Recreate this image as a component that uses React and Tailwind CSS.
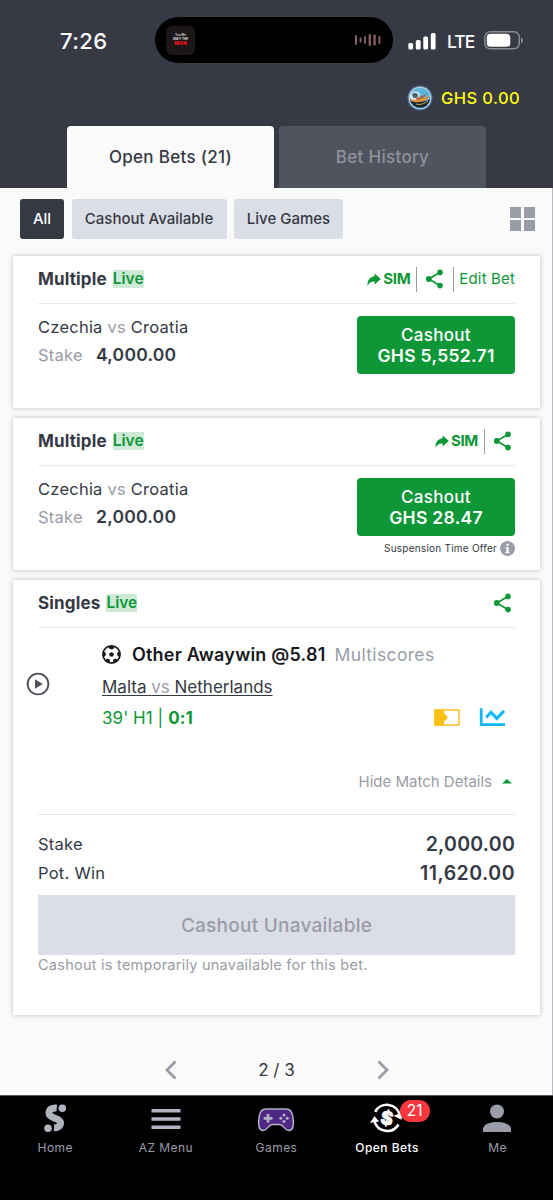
import { clsx } from "clsx";

const ShareIcon = () => (
  <svg width="19" height="20" viewBox="0 0 19 20" className="text-[#0d9737]">
    <path
      d="M15.2 3.3 3.8 10l11.4 6.7"
      fill="none"
      stroke="currentColor"
      strokeWidth="1.7"
    />
    <circle cx="15" cy="3.4" r="2.8" fill="currentColor" />
    <circle cx="3.8" cy="10" r="2.9" fill="currentColor" />
    <circle cx="15" cy="16.6" r="2.8" fill="currentColor" />
  </svg>
);

const SimIcon = () => (
  <svg width="14" height="13" viewBox="0 0 14 13">
    <path
      d="M7.600.4 13.8 6 7.600 11.400V8.5C4.600 8.300 2.200 9.400.6 12.600 0 7.600 3 3.600 7.600 3.300Z"
      fill="#0d9737"
    />
  </svg>
);

const StatusBar = () => (
  <div className="flex h-[63px] items-start pl-[60px] pr-[29px]">
    <span className="mt-[26px] w-[95px] text-[22px] leading-[30px] font-medium tracking-[0.4px] text-white">
      7:26
    </span>
    <div className="mt-[17px] flex h-[46px] w-[238px] items-center justify-between rounded-full bg-black pl-[11px] pr-3">
      <div className="flex h-[29px] w-[29px] flex-col items-center justify-center rounded-md bg-[#1c1618]">
        <span className="text-[3px] leading-[3px] font-bold text-[#c9c2c2]">
          You Me
        </span>
        <span className="text-[3px] leading-[4px] font-bold text-[#e8e0e0]">
          ONLY THE
        </span>
        <span className="text-[5px] leading-[5px] font-black text-[#e0151d]">
          MAN
        </span>
      </div>
      <svg width="26" height="14" viewBox="0 0 26 14" fill="#855d5e">
        <rect x="0" y="2" width="2" height="10" rx="1" />
        <rect x="4.600" y="4.500" width="2" height="5" rx="1" />
        <rect x="9" y="3" width="2" height="8" rx="1" />
        <rect x="13.600" y="1" width="2.400" height="12" rx="1" />
        <rect x="18.400" y="1.500" width="2.400" height="11" rx="1" />
        <rect x="23.400" y="3" width="2" height="8" rx="1" />
      </svg>
    </div>
    <div className="mt-[31px] ml-[15px] flex h-[19px] items-center">
      <svg width="29" height="18" viewBox="0 0 29 18" fill="#fff">
        <rect x="0.300" y="11" width="4.800" height="6.500" rx="1.500" />
        <rect x="7.800" y="8" width="4.800" height="9.500" rx="1.500" />
        <rect x="15.300" y="4.500" width="4.800" height="13" rx="1.500" />
        <rect x="22.800" y="1" width="4.800" height="16.500" rx="1.500" />
      </svg>
      <span className="mt-[2px] ml-[10px] w-[37px] text-[17.5px] leading-5 font-medium tracking-[-0.9px] text-white">
        LTE
      </span>
      <svg width="40" height="19" viewBox="0 0 40 19">
        <rect
          x="0.800"
          y="0.800"
          width="34.500"
          height="17"
          rx="5.500"
          fill="none"
          stroke="#8b8d95"
          strokeWidth="1.400"
        />
        <rect x="2.800" y="2.800" width="23.500" height="13" rx="3.600" fill="#fff" />
        <path d="M37 6.500c2.400.8 2.400 5 0 5.800z" fill="#8b8d95" />
      </svg>
    </div>
  </div>
);

const Avatar = () => (
  <svg width="26" height="26" viewBox="0 0 26 26">
    <circle cx="13" cy="13" r="12.500" fill="#51709a" />
    <circle cx="13" cy="13" r="11.300" fill="#bfd3e0" />
    <circle cx="13" cy="13" r="10.300" fill="#59b5dc" />
    <path d="M2.900 14.500C7 17 18 18 23.200 14a10.300 10.300 0 0 1-20.300.5z" fill="#18262d" />
    <path d="M3 11c1-5 8-6 10-2l-1 5-8 2z" fill="#d8e6e8" />
    <path d="M5 10c1-3 6-2.500 6 .5s-4 3-5 1.500z" fill="#4a6068" />
    <path d="M3.500 14c5 3 12-1 19-3-1 4-9 7-15 6-2 0-4-1-4-3z" fill="#e8902c" />
    <path d="M9 13c4 0 7-3 10-4-1 3-5 5-9 6z" fill="#b9572a" />
    <path d="M9 19c4 1 8 0 12-3" stroke="#d5b05b" fill="none" />
  </svg>
);

const LiveTag = () => (
  <span className="bg-[#cfe9d7] text-[15.5px] leading-[18px] font-semibold text-[#0d9737]">
    Live
  </span>
);

const CardHeader = ({ title, sim, edit }) => (
  <div className="flex h-12 items-center justify-between border-b border-[#e9eaee] pb-px">
    <div className="flex items-center gap-[6px]">
      <h2 className="text-[17px] leading-5 font-bold tracking-[0.15px] text-[#353944]">
        {title}
      </h2>
      <LiveTag />
    </div>

    <div className="flex items-center text-[#0d9737]">
      {sim && (
        <div className="flex h-[25px] items-center gap-[2px] border-r border-[#9a9ca8] pr-[6px]">
          <SimIcon />
          <span className="text-[15px] font-bold tracking-[-0.3px]">SIM</span>
        </div>
      )}
      <div className={clsx("pl-[8px]", edit ? "pr-[9px]" : "pr-[3px]")}>
        <ShareIcon />
      </div>
      {edit && (
        <span className="flex h-[25px] items-center border-l border-[#9a9ca8] pl-[5px] text-[15px] tracking-[0.15px]">
          Edit Bet
        </span>
      )}
    </div>
  </div>
);

const MultipleCard = ({ stake, cashout, edit, offer }) => (
  <section className="h-[152px] bg-white px-[25px] shadow-[0_0_5px_rgba(0,0,0,0.25)]">
    <CardHeader title="Multiple" sim edit={edit} />

    <div className="flex justify-between pt-[12px]">
      <div className="text-[16.5px] tracking-[0.23px] text-[#353944]">
        <p className="leading-[22px]">
          Czechia <span className="text-[#9a9ca8]">vs</span> Croatia
        </p>
        <p className="mt-[6px] flex leading-[22px]">
          <span className="w-[58px] text-[#9a9ca8]">Stake</span>
          <span className="text-[17.5px] font-semibold">{stake}</span>
        </p>
      </div>

      <div>
        <button className="flex h-[58px] w-[158px] flex-col items-center justify-center rounded-[4px] bg-[#0d9737] pt-px text-[17.5px] leading-[21px] tracking-[0.3px] text-white">
          <span className="text-[17px] font-medium">Cashout</span>
          <span className="-mt-px font-semibold">GHS {cashout}</span>
        </button>
        {offer && (
          <div className="mt-[4px] flex items-center justify-end gap-[3px]">
            <span className="text-[10px] leading-4 tracking-[0.23px] text-[#353944]">
              Suspension Time Offer
            </span>
            <svg width="15" height="15" viewBox="0 0 15 15">
              <circle cx="7.500" cy="7.500" r="7.500" fill="#9a9ca8" />
              <path d="M6.400 2.800h2.300v2H6.400zM5.700 6h3v5h.8v1.200H5.500V11h.9V7.200h-.7z" fill="#fff" />
            </svg>
          </div>
        )}
      </div>
    </div>
  </section>
);

const SinglesCard = () => (
  <section className="h-[435px] bg-white px-[25px] shadow-[0_0_5px_rgba(0,0,0,0.25)]">
    <CardHeader title="Singles" />

    <div className="flex h-[187px] border-b border-[#e4e5ea]">
      <div className="-ml-3 w-[76px] pt-[44px]">
        <svg width="24" height="24" viewBox="0 0 24 24">
          <circle cx="12" cy="12" r="10.400" fill="none" stroke="#50535d" strokeWidth="1.900" />
          <path d="M9 7.300v9.400l7.800-4.700z" fill="#50535d" />
        </svg>
      </div>

      <div className="flex-1 pt-[16px]">
        <div className="flex items-center leading-[22px]">
          <svg width="19" height="19" viewBox="0 0 19 19" className="mb-[2px]">
            <circle cx="9.500" cy="9.500" r="8.600" fill="none" stroke="#15181c" strokeWidth="1.600" />
            <path
              d="M9.500 6.900 12 8.700l-.9 2.900H7.900L7 8.700z"
              fill="#15181c"
            />
            <path
              d="M6 1.200h7L11.800 3.500l-2.300 1-2.300-1zM.9 6.500l2.500.8.6 2.500-1.600 2L.8 11.300zM18.100 6.500l-2.500.8-.6 2.500 1.600 2 1.600-.5zM3.200 15.500l1.700-2 2.500.7.700 2.600-1.300 1.400zM15.800 15.500l-1.700-2-2.500.7-.7 2.600 1.300 1.400z"
              fill="#15181c"
            />
          </svg>
          <span className="ml-[11px] text-[18px] font-semibold tracking-[0.2px] text-[#15181c]">
            Other Awaywin @5.81
          </span>
          <span className="ml-[9px] text-[17.5px] tracking-[0.35px] text-[#9a9ca8]">
            Multiscores
          </span>
        </div>
        <p className="mt-[10px] text-[17px] leading-[22px] text-[#353944] underline underline-offset-2">
          Malta <span className="text-[#9a9ca8]">vs</span> Netherlands
        </p>
        <div className="mt-[10px] flex h-[22px] items-center justify-between pr-[10px]">
          <p className="text-[17px] tracking-[0.05px] text-[#0d9737]">
            39' H1 | <span className="font-bold">0:1</span>
          </p>
          <div className="flex items-center gap-[19px] pb-[3px]">
            <svg width="26" height="17" viewBox="0 0 26 17">
              <rect x="1" y="1" width="24" height="15" fill="#fff" stroke="#fcc22f" strokeWidth="1.600" />
              <path d="M.5.500h9.500v3.500l4 4.500-4 4.500v3.500H.5z" fill="#fcc010" />
            </svg>
            <svg width="26" height="19" viewBox="0 0 27 19" fill="none" stroke="#10b6fa" strokeWidth="2.800">
              <path d="M2.300 0v17H27" />
              <path d="M7.500 9.500 12.500 4l6 6.500L26 2.500" strokeWidth="3.200" />
            </svg>
          </div>
        </div>
        <div className="mt-[41px] flex items-center justify-end leading-[22px]">
          <span className="text-[15px] text-[#9a9ca8]">Hide Match Details</span>
          <svg width="10" height="5" viewBox="0 0 10 5" className="mr-[3px] mb-[2px] ml-[10px]">
            <path d="M0 4.500 5 0l5 4.500z" fill="#0d9737" />
          </svg>
        </div>
      </div>
    </div>

    <div className="pt-[15px] text-[16.5px] tracking-[0.25px] text-[#353944]">
      <div className="flex h-[29px] items-center justify-between">
        <span>Stake</span>
        <span className="text-[19.5px] font-semibold">2,000.00</span>
      </div>
      <div className="flex h-[29px] items-center justify-between">
        <span>Pot. Win</span>
        <span className="text-[19.5px] font-semibold tracking-[0.5px]">
          11,620.00
        </span>
      </div>
    </div>

    <button className="mt-[7px] block h-[60px] w-full bg-[#dcdee7] pt-[2px] text-[19px] font-medium tracking-[0.25px] text-[#9a9ca8]">
      Cashout Unavailable
    </button>
    <p className="text-[14.5px] leading-[19px] tracking-[0.25px] text-[#9a9ca8]">
      Cashout is temporarily unavailable for this bet.
    </p>
  </section>
);

const NavItem = ({ label, active, children }) => (
  <div className="flex flex-1 flex-col items-center">
    <div className="relative flex h-[34px] items-center justify-center">
      {children}
    </div>
    <span
      className={clsx(
        "text-[12px] leading-4 tracking-[0.45px]",
        active ? "font-medium text-white" : "text-[#9a9ca8]"
      )}
    >
      {label}
    </span>
  </div>
);

const BottomNav = () => (
  <nav className="flex h-[105px] border-t border-[#55565c] bg-black pt-[10px]">
    <NavItem label="Home">
      <svg width="23" height="28" viewBox="0 0 23 28" fill="#b0b3c0" className="-mt-[10px]">
        <circle cx="18.300" cy="4.200" r="3.800" />
        <circle cx="4" cy="24.200" r="3.800" />
        <path
          d="M12.800 4C7.500 3.400 5 6 5 9c0 6 11.500 4.500 11.500 10 0 3-3 5-6.500 4.800"
          fill="none"
          stroke="#b0b3c0"
          strokeWidth="7"
        />
      </svg>
    </NavItem>
    <NavItem label="AZ Menu">
      <svg width="30" height="22" viewBox="0 0 30 22" fill="#b0b3c0" className="-mt-[8px]">
        <path d="M.500 1h29v3.400h-29zM.500 9.300h29v3.400h-29zM.500 17.600h29V21h-29z" />
      </svg>
    </NavItem>
    <NavItem label="Games">
      <svg width="38" height="26" viewBox="0 0 38 26" className="-mt-[6px]">
        <path
          d="M9 2h20c4.500 0 6.500 3.500 7 8.500.6 6 1 13-4.500 13-4 0-4.500-6-9-6h-7c-4.500 0-5 6-9 6C1 23.500 1.400 16.500 2 10.500 2.500 5.500 4.500 2 9 2z"
          fill="#4f2885"
          stroke="#b0b3c0"
          strokeWidth="1.500"
        />
        <path d="M9.600 7h2.800v2.900h3v2.800h-3v2.900H9.600v-2.900h-3V9.900h3z" fill="#b0b3c0" />
        <g fill="#b0b3c0">
          <circle cx="27" cy="8" r="1.500" />
          <circle cx="27" cy="14.400" r="1.500" />
          <circle cx="23.800" cy="11.200" r="1.500" />
          <circle cx="30.200" cy="11.200" r="1.500" />
        </g>
      </svg>
    </NavItem>
    <NavItem label="Open Bets" active>
      <svg width="33" height="32" viewBox="0 0 33 32" className="-mt-[10px] mr-[2px]">
        <g fill="none" stroke="#fff" strokeWidth="2.600">
          <path d="M5.200 9.800A13.200 13.200 0 0 1 29.800 13.500" />
          <path d="M28.500 22.500A13.200 13.200 0 0 1 4.400 19" />
        </g>
        <path d="M23.500 13.800 32.500 10.500 31.500 17.800zM0 20.800 4.500 14.200 9.300 19.500z" fill="#fff" />
        <text
          x="17"
          y="22.700"
          textAnchor="middle"
          fill="#fff"
          stroke="#fff"
          strokeWidth="0.500"
          transform="rotate(10 17 16)"
          className="text-[18.5px] font-black"
        >
          $
        </text>
      </svg>
      <span className="absolute -top-[6px] left-[30px] flex h-[22px] w-[30px] items-center justify-center rounded-full bg-[#fa363f] text-[15.5px] text-white">
        21
      </span>
    </NavItem>
    <NavItem label="Me">
      <svg width="28" height="29" viewBox="0 0 28 29" fill="#9a9ca8" className="-mt-[9px] mr-px">
        <circle cx="14" cy="7.500" r="7" />
        <path d="M0 28v-3c0-4.500 7-7 14-7s14 2.500 14 7v3z" />
      </svg>
    </NavItem>
  </nav>
);

const App = () => {
  return (
    <div className="h-[1200px] w-[553px] overflow-hidden bg-[#fafafa] font-['Inter','Liberation_Sans',sans-serif]">
      <header className="h-[188px] bg-[#373a45]">
        <StatusBar />

        <div className="flex h-[63px] items-center justify-end pt-[7px] pr-[33px]">
          <Avatar />
          <span className="mt-px ml-[8px] text-[16.5px] font-medium tracking-[0.4px] text-[#fdfd0e]">
            GHS 0.00
          </span>
        </div>

        <div className="flex gap-[5px] pl-[67px] text-[17px] leading-[63px] tracking-[0.3px]">
          <div className="h-[62px] w-[207px] rounded-t bg-[#fafafa] text-center font-medium text-[#353944]">
            Open Bets (21)
          </div>
          <div className="h-[62px] w-[207px] rounded-t bg-[#50545f] text-center font-medium text-[#8f929d]">
            Bet History
          </div>
        </div>
      </header>

      <main className="h-[907px] border-r border-[#b9b9be] pt-[11px] pl-[13px]">
        <div className="flex h-10 items-center pl-[7px] text-[15px] leading-10 font-medium text-[#353944]">
          <span className="w-11 rounded-[3px] bg-[#353944] text-center text-white">
            All
          </span>
          <span className="ml-2 w-[155px] rounded-[3px] bg-[#dcdee7] pr-px text-center">
            Cashout Available
          </span>
          <span className="ml-[7px] w-[109px] rounded-[3px] bg-[#dcdee7] text-center">
            Live Games
          </span>
          <div className="mr-[17px] ml-auto grid grid-cols-2 gap-x-[3px] gap-y-[2px]">
            <i className="h-[11px] w-[11px] bg-[#9a9ca8]" />
            <i className="h-[11px] w-[11px] bg-[#9a9ca8]" />
            <i className="h-[11px] w-[11px] bg-[#9a9ca8]" />
            <i className="h-[11px] w-[11px] bg-[#9a9ca8]" />
          </div>
        </div>

        {/* Bet slips */}
        <div className="mt-[17px] flex w-[527px] flex-col gap-[10px]">
          <MultipleCard stake="4,000.00" cashout="5,552.71" edit />
          <MultipleCard stake="2,000.00" cashout="28.47" offer />
          <SinglesCard />
        </div>

        {/* Pagination */}
        <div className="mt-[44px] flex items-center justify-center pr-3 text-[#353944]">
          <svg width="12" height="20" viewBox="0 0 12 20" fill="none" stroke="#9a9ca8" strokeWidth="2.800">
            <path d="M10.500 1.500 2 10l8.500 8.500" />
          </svg>
          <span className="w-[200px] text-center text-[17px] leading-[22px]">2 / 3</span>
          <svg width="12" height="20" viewBox="0 0 12 20" fill="none" stroke="#9a9ca8" strokeWidth="2.800">
            <path d="M1.500 1.500 10 10l-8.500 8.500" />
          </svg>
        </div>
      </main>

      <BottomNav />
    </div>
  );
};

export default App;
